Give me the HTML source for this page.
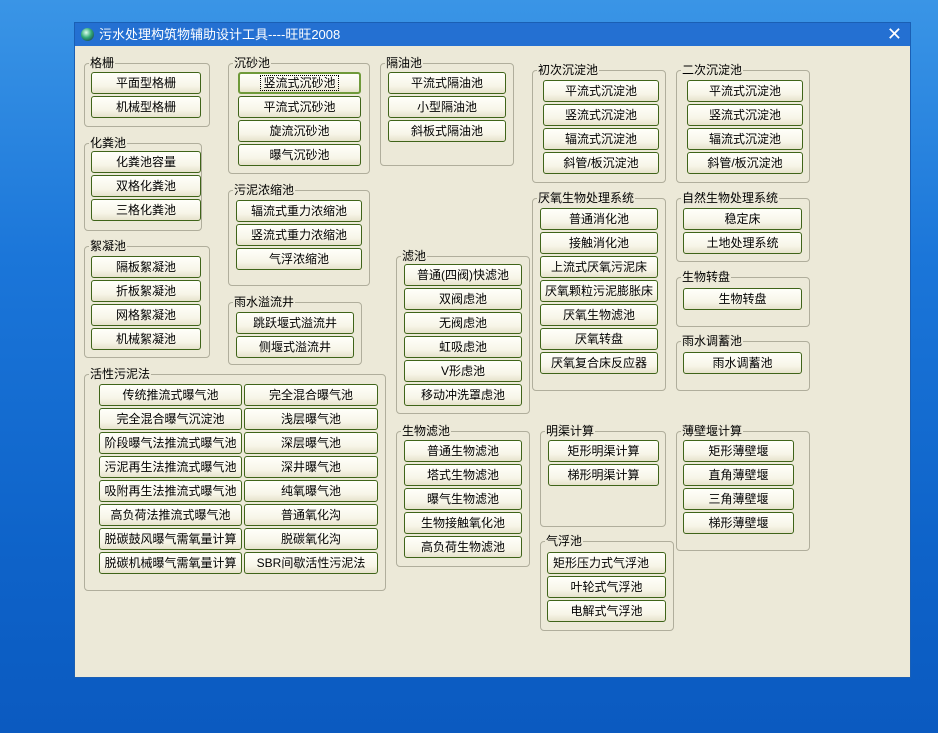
<!DOCTYPE html>
<html><head><meta charset="utf-8">
<style>
*{margin:0;padding:0;box-sizing:border-box}
html,body{width:938px;height:733px;overflow:hidden}
body{background:linear-gradient(180deg,#3a95e6 0%,#1b76d9 35%,#0e63c9 75%,#0b5ac0 100%);font-family:"Liberation Sans","Noto Sans CJK SC","WenQuanYi Zen Hei",sans-serif;font-size:12px;color:#000;position:relative}
#win{position:absolute;left:74px;top:22px;width:837px;height:656px;background:#ece9d8;border:1px solid #1a5fb4}
#title{position:absolute;left:0;top:0;width:100%;height:23px;background:#2470d2;color:#fff;font-size:13px;line-height:23px;padding-left:24px}
#title .ic{position:absolute;left:6px;top:5px;width:13px;height:13px;border-radius:50%;background:radial-gradient(circle at 40% 35%,#dfe,#3a7 45%,#124 100%)}
#title .x{position:absolute;right:8px;top:0;font-size:18px;line-height:23px}
.g{position:absolute;border:1px solid #b0ae9c;border-radius:4px}
.g>span{position:absolute;left:4px;top:-9px;background:#ece9d8;padding:0 1px;line-height:16px;white-space:nowrap;font-size:12px}
.b{position:absolute;height:22px;border:1px solid #3f6419;border-radius:3px;background:linear-gradient(180deg,#fffffa 0%,#f7f5e8 65%,#e6e2cc 100%);text-align:center;line-height:20px;white-space:nowrap;overflow:hidden}
</style></head><body>
<div id="win">
<div id="title"><div class="ic"></div>污水处理构筑物辅助设计工具----旺旺2008<div class="x">✕</div></div>
</div>
<div id="c" style="position:absolute;left:0;top:0">
<div class="g" style="left:84px;top:63px;width:126px;height:64px"><span>格栅</span></div>
<div class="b" style="left:91px;top:72px;width:110px">平面型格栅</div>
<div class="b" style="left:91px;top:96px;width:110px">机械型格栅</div>
<div class="g" style="left:84px;top:143px;width:118px;height:88px"><span>化粪池</span></div>
<div class="b" style="left:91px;top:151px;width:110px">化粪池容量</div>
<div class="b" style="left:91px;top:175px;width:110px">双格化粪池</div>
<div class="b" style="left:91px;top:199px;width:110px">三格化粪池</div>
<div class="g" style="left:84px;top:246px;width:126px;height:112px"><span>絮凝池</span></div>
<div class="b" style="left:91px;top:256px;width:110px">隔板絮凝池</div>
<div class="b" style="left:91px;top:280px;width:110px">折板絮凝池</div>
<div class="b" style="left:91px;top:304px;width:110px">网格絮凝池</div>
<div class="b" style="left:91px;top:328px;width:110px">机械絮凝池</div>
<div class="g" style="left:84px;top:374px;width:302px;height:217px"><span>活性污泥法</span></div>
<div class="b" style="left:99px;top:384px;width:143px">传统推流式曝气池</div>
<div class="b" style="left:244px;top:384px;width:134px">完全混合曝气池</div>
<div class="b" style="left:99px;top:408px;width:143px">完全混合曝气沉淀池</div>
<div class="b" style="left:244px;top:408px;width:134px">浅层曝气池</div>
<div class="b" style="left:99px;top:432px;width:143px">阶段曝气法推流式曝气池</div>
<div class="b" style="left:244px;top:432px;width:134px">深层曝气池</div>
<div class="b" style="left:99px;top:456px;width:143px">污泥再生法推流式曝气池</div>
<div class="b" style="left:244px;top:456px;width:134px">深井曝气池</div>
<div class="b" style="left:99px;top:480px;width:143px">吸附再生法推流式曝气池</div>
<div class="b" style="left:244px;top:480px;width:134px">纯氧曝气池</div>
<div class="b" style="left:99px;top:504px;width:143px">高负荷法推流式曝气池</div>
<div class="b" style="left:244px;top:504px;width:134px">普通氧化沟</div>
<div class="b" style="left:99px;top:528px;width:143px">脱碳鼓风曝气需氧量计算</div>
<div class="b" style="left:244px;top:528px;width:134px">脱碳氧化沟</div>
<div class="b" style="left:99px;top:552px;width:143px">脱碳机械曝气需氧量计算</div>
<div class="b" style="left:244px;top:552px;width:134px">SBR间歇活性污泥法</div>
<div class="g" style="left:228px;top:63px;width:142px;height:111px"><span>沉砂池</span></div>
<div class="b" style="left:238px;top:72px;width:123px;border-width:2px;border-color:#6f9a3a;line-height:18px"><span style="outline:1px dotted #000;padding:0 2px">竖流式沉砂池</span></div>
<div class="b" style="left:238px;top:96px;width:123px">平流式沉砂池</div>
<div class="b" style="left:238px;top:120px;width:123px">旋流沉砂池</div>
<div class="b" style="left:238px;top:144px;width:123px">曝气沉砂池</div>
<div class="g" style="left:228px;top:190px;width:142px;height:96px"><span>污泥浓缩池</span></div>
<div class="b" style="left:236px;top:200px;width:126px">辐流式重力浓缩池</div>
<div class="b" style="left:236px;top:224px;width:126px">竖流式重力浓缩池</div>
<div class="b" style="left:236px;top:248px;width:126px">气浮浓缩池</div>
<div class="g" style="left:228px;top:302px;width:134px;height:63px"><span>雨水溢流井</span></div>
<div class="b" style="left:236px;top:312px;width:118px">跳跃堰式溢流井</div>
<div class="b" style="left:236px;top:336px;width:118px">侧堰式溢流井</div>
<div class="g" style="left:380px;top:63px;width:134px;height:103px"><span>隔油池</span></div>
<div class="b" style="left:388px;top:72px;width:118px">平流式隔油池</div>
<div class="b" style="left:388px;top:96px;width:118px">小型隔油池</div>
<div class="b" style="left:388px;top:120px;width:118px">斜板式隔油池</div>
<div class="g" style="left:396px;top:256px;width:134px;height:158px"><span>滤池</span></div>
<div class="b" style="left:404px;top:264px;width:118px">普通(四阀)快滤池</div>
<div class="b" style="left:404px;top:288px;width:118px">双阀虑池</div>
<div class="b" style="left:404px;top:312px;width:118px">无阀虑池</div>
<div class="b" style="left:404px;top:336px;width:118px">虹吸虑池</div>
<div class="b" style="left:404px;top:360px;width:118px">V形虑池</div>
<div class="b" style="left:404px;top:384px;width:118px">移动冲洗罩虑池</div>
<div class="g" style="left:396px;top:431px;width:134px;height:136px"><span>生物滤池</span></div>
<div class="b" style="left:404px;top:440px;width:118px">普通生物滤池</div>
<div class="b" style="left:404px;top:464px;width:118px">塔式生物滤池</div>
<div class="b" style="left:404px;top:488px;width:118px">曝气生物滤池</div>
<div class="b" style="left:404px;top:512px;width:118px">生物接触氧化池</div>
<div class="b" style="left:404px;top:536px;width:118px">高负荷生物滤池</div>
<div class="g" style="left:532px;top:70px;width:134px;height:113px"><span>初次沉淀池</span></div>
<div class="b" style="left:543px;top:80px;width:116px">平流式沉淀池</div>
<div class="b" style="left:543px;top:104px;width:116px">竖流式沉淀池</div>
<div class="b" style="left:543px;top:128px;width:116px">辐流式沉淀池</div>
<div class="b" style="left:543px;top:152px;width:116px">斜管/板沉淀池</div>
<div class="g" style="left:676px;top:70px;width:134px;height:113px"><span>二次沉淀池</span></div>
<div class="b" style="left:687px;top:80px;width:116px">平流式沉淀池</div>
<div class="b" style="left:687px;top:104px;width:116px">竖流式沉淀池</div>
<div class="b" style="left:687px;top:128px;width:116px">辐流式沉淀池</div>
<div class="b" style="left:687px;top:152px;width:116px">斜管/板沉淀池</div>
<div class="g" style="left:532px;top:198px;width:134px;height:193px"><span>厌氧生物处理系统</span></div>
<div class="b" style="left:540px;top:208px;width:118px">普通消化池</div>
<div class="b" style="left:540px;top:232px;width:118px">接触消化池</div>
<div class="b" style="left:540px;top:256px;width:118px">上流式厌氧污泥床</div>
<div class="b" style="left:540px;top:280px;width:118px">厌氧颗粒污泥膨胀床</div>
<div class="b" style="left:540px;top:304px;width:118px">厌氧生物滤池</div>
<div class="b" style="left:540px;top:328px;width:118px">厌氧转盘</div>
<div class="b" style="left:540px;top:352px;width:118px">厌氧复合床反应器</div>
<div class="g" style="left:676px;top:198px;width:134px;height:64px"><span>自然生物处理系统</span></div>
<div class="b" style="left:683px;top:208px;width:119px">稳定床</div>
<div class="b" style="left:683px;top:232px;width:119px">土地处理系统</div>
<div class="g" style="left:676px;top:277px;width:134px;height:50px"><span>生物转盘</span></div>
<div class="b" style="left:683px;top:288px;width:119px">生物转盘</div>
<div class="g" style="left:676px;top:341px;width:134px;height:50px"><span>雨水调蓄池</span></div>
<div class="b" style="left:683px;top:352px;width:119px">雨水调蓄池</div>
<div class="g" style="left:540px;top:431px;width:126px;height:96px"><span>明渠计算</span></div>
<div class="b" style="left:548px;top:440px;width:111px">矩形明渠计算</div>
<div class="b" style="left:548px;top:464px;width:111px">梯形明渠计算</div>
<div class="g" style="left:676px;top:431px;width:134px;height:120px"><span>薄壁堰计算</span></div>
<div class="b" style="left:683px;top:440px;width:111px">矩形薄壁堰</div>
<div class="b" style="left:683px;top:464px;width:111px">直角薄壁堰</div>
<div class="b" style="left:683px;top:488px;width:111px">三角薄壁堰</div>
<div class="b" style="left:683px;top:512px;width:111px">梯形薄壁堰</div>
<div class="g" style="left:540px;top:541px;width:134px;height:90px"><span>气浮池</span></div>
<div class="b" style="left:547px;top:552px;width:119px;text-align:left;padding-left:5px">矩形压力式气浮池</div>
<div class="b" style="left:547px;top:576px;width:119px">叶轮式气浮池</div>
<div class="b" style="left:547px;top:600px;width:119px">电解式气浮池</div>
</div>
</body></html>
